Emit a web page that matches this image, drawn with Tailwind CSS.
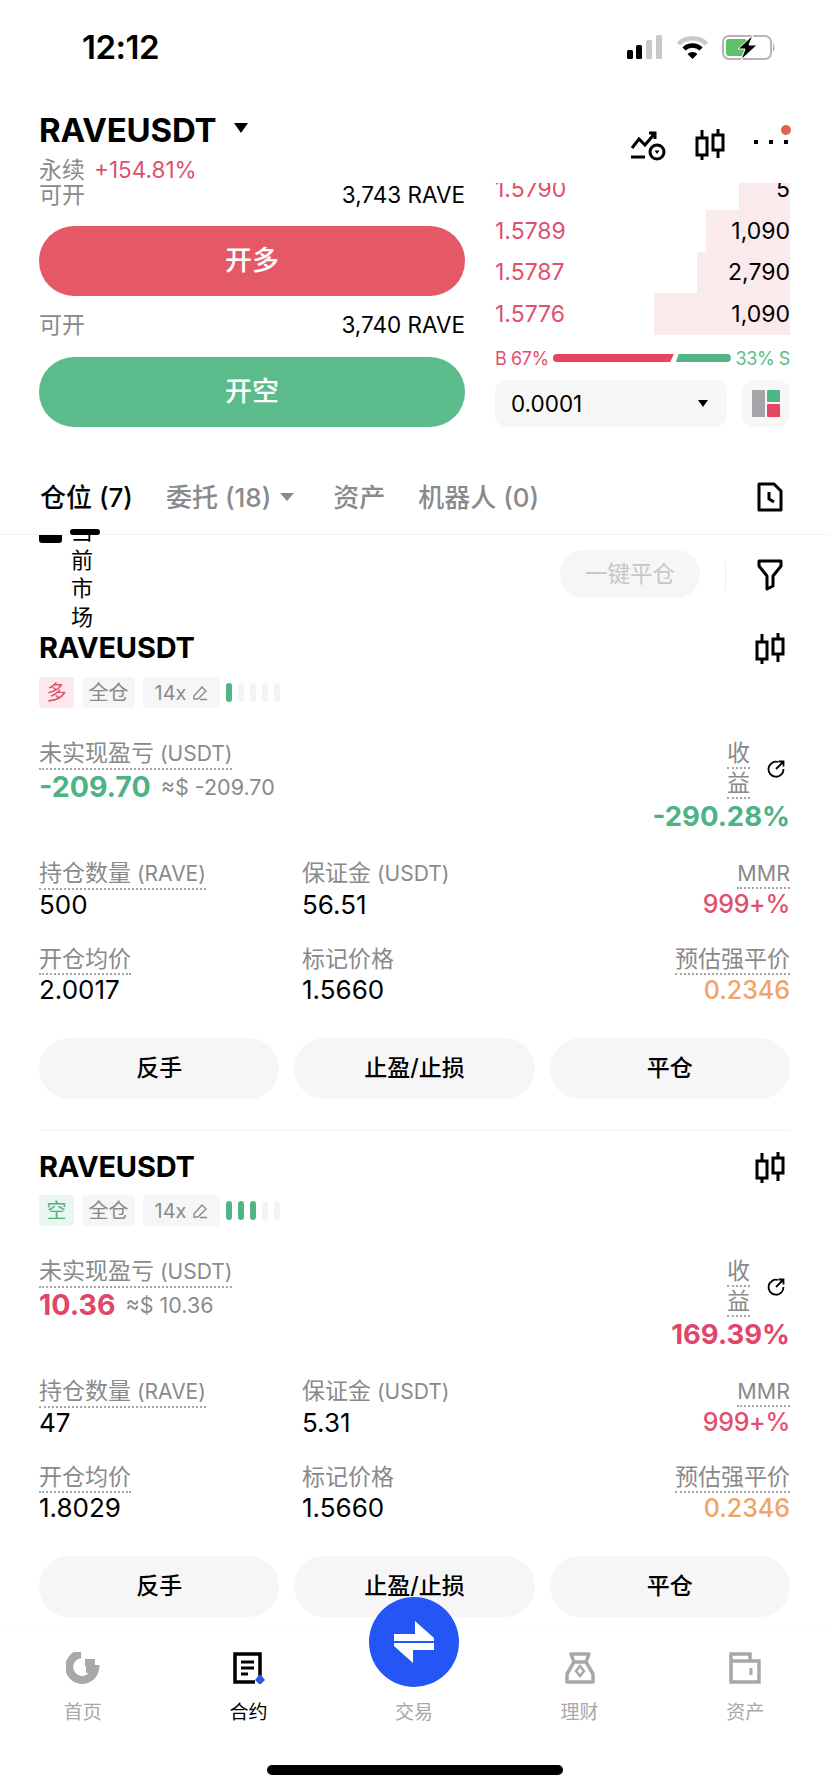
<!DOCTYPE html>
<html lang="zh-CN">
<head>
  <meta charset="UTF-8" />
  <meta name="viewport" content="width=device-width, initial-scale=1.0" />
  <title>RAVEUSDT</title>
  <script src="https://cdn.jsdelivr.net/npm/@tailwindcss/browser@4"></script>
</head>
<body class="bg-white">
  <div class="relative w-[828px] h-[1792px] overflow-hidden flex flex-col bg-white text-black font-['Inter','Noto_Sans_CJK_SC',sans-serif]">

    <!-- Status bar -->
    <div class="h-[96px] shrink-0 flex justify-between pl-[82px] pr-[52px] pt-[27px]">
      <div class="text-[33px] leading-[40px] font-semibold tracking-[-0.5px]">12:12</div>
      <div class="flex items-start pt-[8px]">
        <svg width="35" height="24" viewBox="0 0 35 24">
          <rect x="0" y="15" width="6" height="9" rx="1.5" fill="#000"/>
          <rect x="9" y="10" width="6" height="14" rx="1.5" fill="#000"/>
          <rect x="19" y="5" width="6" height="19" rx="1.5" fill="#c9c9c9"/>
          <rect x="29" y="0" width="6" height="24" rx="1.5" fill="#c9c9c9"/>
        </svg>
        <svg width="33" height="24" viewBox="0 0 32 24" class="ml-[14px]">
          <path d="M2 9 A20 20 0 0 1 30 9" fill="none" stroke="#c9c9c9" stroke-width="4.5"/>
          <path d="M7.5 14 A12 12 0 0 1 24.5 14" fill="none" stroke="#000" stroke-width="4.5"/>
          <path d="M11 19 L16 24 L21 19 A7 7 0 0 0 11 19 Z" fill="#000"/>
        </svg>
        <svg width="54" height="25" viewBox="0 0 54 25" class="ml-[13px]">
          <rect x="1" y="1" width="48" height="23" rx="6" fill="#fff" stroke="#b5b5b5" stroke-width="2"/>
          <rect x="4" y="4" width="21" height="17" rx="3" fill="#5cc169"/>
          <path d="M51 8 C53 9 53 16 51 17 Z" fill="#b5b5b5"/>
          <path d="M31 0 L16 14 L23 14 L19 25 L35 10 L27 10 Z" fill="#000" stroke="#fff" stroke-width="1"/>
        </svg>
      </div>
    </div>

    <!-- Header -->
    <div class="h-[87px] shrink-0 flex justify-between pl-[39px] pr-[38px]">
      <div>
        <div class="flex items-center h-[46px] mt-[11px]">
          <span class="text-[33px] leading-[38px] font-bold tracking-[-0.2px]">RAVEUSDT</span>
          <span class="ml-[18px] mb-[4px] w-0 h-0 border-l-[7px] border-r-[7px] border-t-[10px] border-l-transparent border-r-transparent border-t-black"></span>
        </div>
        <div class="flex items-center h-[26px] mt-[4px]">
          <span class="text-[23px] leading-[26px] text-[#8a8a8a]">永续</span>
          <span class="ml-[9px] text-[22.5px] leading-[26px] text-[#e0506c]">+154.81%</span>
        </div>
      </div>
      <div class="flex items-start mt-[33px]">
        <svg width="36" height="30" viewBox="0 0 36 30" class="mt-[2px]">
          <path d="M2 17 L9 8 L15 14 L25 2 M19 2 H25 V8" fill="none" stroke="#000" stroke-width="3"/>
          <path d="M1 26 H15" stroke="#000" stroke-width="3"/>
          <circle cx="27" cy="21" r="7" fill="#fff" stroke="#000" stroke-width="3"/>
          <path d="M24.5 19.5 H29.5 L27 23 Z" fill="#000"/>
        </svg>
        <svg width="30" height="32" viewBox="0 0 30 32" class="ml-[29px]">
          <path d="M7 1 V31 M23 0 V29" stroke="#000" stroke-width="3"/>
          <rect x="2" y="9" width="10" height="17" fill="#fff" stroke="#000" stroke-width="3"/>
          <rect x="18" y="6" width="10" height="15" fill="#fff" stroke="#000" stroke-width="3"/>
        </svg>
        <div class="relative ml-[29px] w-[36px] h-[32px]">
          <div class="absolute left-0 top-[11px] flex gap-[11px]">
            <span class="w-[4px] h-[4px] bg-black"></span>
            <span class="w-[4px] h-[4px] bg-black"></span>
            <span class="w-[4px] h-[4px] bg-black"></span>
          </div>
          <span class="absolute left-[27px] -top-[4px] w-[10px] h-[10px] rounded-full bg-[#e8604f]"></span>
        </div>
      </div>
    </div>

    <!-- Order panel -->
    <div class="h-[264px] shrink-0 flex pl-[39px] pr-[38px] overflow-hidden">
      <div class="w-[426px]">
        <div class="flex justify-between items-center h-[24px] text-[22.5px]">
          <span class="text-[#8a8a8a] text-[23px]">可开</span>
          <span>3,743 RAVE</span>
        </div>
        <button class="mt-[19px] w-full h-[70px] rounded-full bg-[#e55866] text-white text-[27px] font-medium">开多</button>
        <div class="mt-[17px] flex justify-between items-center h-[24px] text-[22.5px]">
          <span class="text-[#8a8a8a] text-[23px]">可开</span>
          <span>3,740 RAVE</span>
        </div>
        <button class="mt-[20px] w-full h-[70px] rounded-full bg-[#5cbb8a] text-white text-[27px] font-medium">开空</button>
      </div>

      <div class="ml-[30px] w-[295px] text-[23px]">
        <div class="-mt-[15px] h-[42px] flex justify-between items-center relative">
          <span class="absolute right-0 top-[15px] w-[51px] h-[27px] bg-[#fbeaec]"></span>
          <span class="relative text-[#e0506c]">1.5790</span><span class="relative">5</span>
        </div>
        <div class="h-[42px] flex justify-between items-center relative">
          <span class="absolute right-0 top-0 w-[84px] h-full bg-[#fbeaec]"></span>
          <span class="relative text-[#e0506c]">1.5789</span><span class="relative">1,090</span>
        </div>
        <div class="h-[41px] flex justify-between items-center relative">
          <span class="absolute right-0 top-0 w-[93px] h-full bg-[#fbeaec]"></span>
          <span class="relative text-[#e0506c]">1.5787</span><span class="relative">2,790</span>
        </div>
        <div class="h-[42px] flex justify-between items-center relative">
          <span class="absolute right-0 top-0 w-[136px] h-full bg-[#fbeaec]"></span>
          <span class="relative text-[#e0506c]">1.5776</span><span class="relative">1,090</span>
        </div>
        <div class="mt-[12px] h-[22px] flex items-center text-[18px]">
          <span class="text-[#e0506c] tracking-[-0.4px]">B 67%</span>
          <span class="ml-[4px] w-[121px] h-[8px] rounded-l-full bg-[#e5455f] [clip-path:polygon(0_0,100%_0,97%_100%,0_100%)]"></span>
          <span class="ml-[2px] w-[55px] h-[8px] rounded-r-full bg-[#4fb585] [clip-path:polygon(5%_0,100%_0,100%_100%,0_100%)]"></span>
          <span class="ml-auto text-[#5cbb8a] tracking-[-0.4px]">33% S</span>
        </div>
        <div class="mt-[11px] flex justify-between">
          <div class="w-[232px] h-[47px] rounded-[12px] bg-[#f7f7f7] flex items-center justify-between pl-[16px] pr-[19px]">
            <span class="text-[22.5px]">0.0001</span>
            <span class="w-0 h-0 border-l-[5px] border-r-[5px] border-t-[7px] border-l-transparent border-r-transparent border-t-black"></span>
          </div>
          <div class="w-[48px] h-[47px] rounded-[12px] bg-[#f7f7f7] flex items-center justify-center gap-[2px]">
            <span class="w-[13px] h-[27px] bg-[#a3a5a8] rounded-[1px]"></span>
            <div class="flex flex-col gap-[2px]">
              <span class="w-[13px] h-[12px] bg-[#4fb585] rounded-[1px]"></span>
              <span class="w-[13px] h-[13px] bg-[#e5455f] rounded-[1px]"></span>
            </div>
          </div>
        </div>
      </div>
    </div>

    <!-- Tabs -->
    <div class="relative mt-[23px] h-[65px] shrink-0 flex items-center pl-[40px] pr-[45px] pb-[10px] border-b border-[#f3f3f3] text-[26px] text-[#8a8a8a] font-medium">
      <span class="text-black">仓位 (7)</span>
      <span class="ml-[33px]">委托 (18)</span>
      <span class="ml-[9px] w-0 h-0 border-l-[7px] border-r-[7px] border-t-[8px] border-l-transparent border-r-transparent border-t-[#8a8a8a]"></span>
      <span class="ml-[39px]">资产</span>
      <span class="ml-[33px]">机器人 (0)</span>
      <svg width="26" height="30" viewBox="0 0 26 30" class="ml-auto">
        <path d="M2 2 H17 L24 9 V28 H2 Z" fill="none" stroke="#000" stroke-width="3" stroke-linejoin="round"/>
        <path d="M12 10 V17 L17 20" fill="none" stroke="#000" stroke-width="3"/>
      </svg>
      <span class="absolute left-[70px] -bottom-[1px] w-[30px] h-[6px] rounded-full bg-black"></span>
    </div>

    <!-- Positions -->
    <div class="flex-1 min-h-0 overflow-hidden pl-[39px] pr-[38px]">
      <div class="h-[96px] flex items-start overflow-hidden">
        <span class="w-[23px] h-[8px] rounded-b-[3px] bg-black"></span>
        <div class="ml-[8px] w-[24px] -mt-[18px] text-[22px] leading-[28.5px] text-center">当前市场</div>
        <button class="ml-auto mt-[15px] w-[140px] h-[48px] rounded-full bg-[#f6f6f6] text-[22.5px] text-[#c6c6c6]">一键平仓</button>
        <span class="ml-[25px] mt-[27px] w-px h-[28px] bg-[#eeeeee]"></span>
        <svg width="26" height="32" viewBox="0 0 26 32" class="ml-[31px] mr-[7px] mt-[24px]">
          <path d="M2 2 H24 V7 L16 17 V27 L10 30 V17 L2 7 Z" fill="none" stroke="#000" stroke-width="3" stroke-linejoin="round"/>
        </svg>
      </div>

      <!-- Long position -->
      <div class="pb-[31px] border-b border-[#f3f3f3]">
        <div class="flex justify-between items-center h-[34px]">
          <span class="text-[29px] font-bold tracking-[-0.2px]">RAVEUSDT</span>
          <svg width="30" height="32" viewBox="0 0 30 32" class="mr-[5px] mt-[1px]">
            <path d="M7 1 V31 M23 0 V29" stroke="#000" stroke-width="3"/>
            <rect x="2" y="9" width="10" height="17" fill="#fff" stroke="#000" stroke-width="3"/>
            <rect x="18" y="6" width="10" height="15" fill="#fff" stroke="#000" stroke-width="3"/>
          </svg>
        </div>
        <div class="mt-[12px] flex items-center h-[31px] text-[20px]">
          <span class="w-[35px] h-full rounded-[4px] bg-[#fbe9ec] text-[#e0506c] flex items-center justify-center">多</span>
          <span class="ml-[8px] w-[53px] h-full rounded-[4px] bg-[#f6f6f7] text-[#8a8a8a] flex items-center justify-center">全仓</span>
          <span class="ml-[8px] w-[77px] h-full rounded-[4px] bg-[#f6f6f7] text-[#8a8a8a] flex items-center justify-center gap-[6px]">14x
            <svg width="16" height="16" viewBox="0 0 16 16"><path d="M2 11 L10 2 L14 6 L6 14 H2 Z M8 14.5 H15" fill="none" stroke="#8a8a8a" stroke-width="1.4"/></svg>
          </span>
          <div class="ml-[6px] flex gap-[6px]">
            <span class="w-[6px] h-[19px] rounded-full bg-[#4fb585]"></span>
            <span class="w-[6px] h-[19px] rounded-full bg-[#f3f3f3]"></span>
            <span class="w-[6px] h-[19px] rounded-full bg-[#f3f3f3]"></span>
            <span class="w-[6px] h-[19px] rounded-full bg-[#f3f3f3]"></span>
            <span class="w-[6px] h-[19px] rounded-full bg-[#f3f3f3]"></span>
          </div>
        </div>
        <div class="mt-[31px] flex justify-between items-start">
          <div>
            <div class="inline-block text-[21px] leading-[28px] text-[#8a8a8a] border-b-2 border-dotted border-[#a5a5a5]"><span class="text-[23px]">未实现盈亏</span> (USDT)</div>
            <div class="flex items-center h-[34px]">
              <span class="text-[28.5px] font-bold text-[#4db284]">-209.70</span>
              <span class="ml-[10px] text-[21.5px] text-[#8a8a8a]">≈$ -209.70</span>
            </div>
          </div>
          <div class="flex flex-col items-end">
            <div class="flex items-center">
              <div class="w-[23px] text-[23px] leading-[28px] text-[#8a8a8a]">
                <div class="border-b-2 border-dotted border-[#a5a5a5]">收</div>
                <div class="border-b-2 border-dotted border-[#a5a5a5]">益</div>
              </div>
              <svg width="20" height="20" viewBox="0 0 20 20" class="ml-[16px] mr-[4px]">
                <path d="M12 3 A7.5 7.5 0 1 0 17.5 10" fill="none" stroke="#000" stroke-width="1.8"/>
                <path d="M10 10 L17 3 M12.5 2.5 H17.5 V7.5" fill="none" stroke="#000" stroke-width="1.8"/>
              </svg>
            </div>
            <div class="text-[27.5px] leading-[34px] font-bold text-[#4db284]">-290.28%</div>
          </div>
        </div>
        <div class="mt-[26px] grid grid-cols-[263px_1fr_auto] gap-y-[25px]">
          <div>
            <div class="inline-block text-[21px] leading-[28px] text-[#8a8a8a] border-b-2 border-dotted border-[#a5a5a5]"><span class="text-[23px]">持仓数量</span> (RAVE)</div>
            <div class="text-[26px] leading-[30px]">500</div>
          </div>
          <div>
            <div class="text-[21px] leading-[28px] text-[#8a8a8a]"><span class="text-[23px]">保证金</span> (USDT)</div>
            <div class="mt-[2px] text-[26px] leading-[30px]">56.51</div>
          </div>
          <div class="text-right">
            <div class="inline-block text-[21.5px] leading-[28px] text-[#8a8a8a] border-b-2 border-dotted border-[#a5a5a5]">MMR</div>
            <div class="text-[25px] leading-[30px] font-medium tracking-[-0.3px] text-[#e0506c]">999+%</div>
          </div>
          <div>
            <div class="inline-block text-[23px] leading-[28px] text-[#8a8a8a] border-b-2 border-dotted border-[#a5a5a5]">开仓均价</div>
            <div class="text-[26px] leading-[30px]">2.0017</div>
          </div>
          <div>
            <div class="text-[23px] leading-[28px] text-[#8a8a8a]">标记价格</div>
            <div class="mt-[2px] text-[26px] leading-[30px]">1.5660</div>
          </div>
          <div class="text-right">
            <div class="inline-block text-[23px] leading-[28px] text-[#8a8a8a] border-b-2 border-dotted border-[#a5a5a5]">预估强平价</div>
            <div class="text-[25px] leading-[30px] font-medium text-[#f0a467]">0.2346</div>
          </div>
        </div>
        <div class="mt-[33px] grid grid-cols-3 gap-[15px]">
          <button class="h-[61px] rounded-full bg-[#f6f6f6] text-[23px] font-medium">反手</button>
          <button class="h-[61px] rounded-full bg-[#f6f6f6] text-[23px] font-medium">止盈/止损</button>
          <button class="h-[61px] rounded-full bg-[#f6f6f6] text-[23px] font-medium">平仓</button>
        </div>
      </div>

      <!-- Short position -->
      <div class="mt-[19px]">
        <div class="flex justify-between items-center h-[34px]">
          <span class="text-[29px] font-bold tracking-[-0.2px]">RAVEUSDT</span>
          <svg width="30" height="32" viewBox="0 0 30 32" class="mr-[5px] mt-[1px]">
            <path d="M7 1 V31 M23 0 V29" stroke="#000" stroke-width="3"/>
            <rect x="2" y="9" width="10" height="17" fill="#fff" stroke="#000" stroke-width="3"/>
            <rect x="18" y="6" width="10" height="15" fill="#fff" stroke="#000" stroke-width="3"/>
          </svg>
        </div>
        <div class="mt-[11px] flex items-center h-[31px] text-[20px]">
          <span class="w-[35px] h-full rounded-[4px] bg-[#e9f7f0] text-[#4db284] flex items-center justify-center">空</span>
          <span class="ml-[8px] w-[53px] h-full rounded-[4px] bg-[#f6f6f7] text-[#8a8a8a] flex items-center justify-center">全仓</span>
          <span class="ml-[8px] w-[77px] h-full rounded-[4px] bg-[#f6f6f7] text-[#8a8a8a] flex items-center justify-center gap-[6px]">14x
            <svg width="16" height="16" viewBox="0 0 16 16"><path d="M2 11 L10 2 L14 6 L6 14 H2 Z M8 14.5 H15" fill="none" stroke="#8a8a8a" stroke-width="1.4"/></svg>
          </span>
          <div class="ml-[6px] flex gap-[6px]">
            <span class="w-[6px] h-[19px] rounded-full bg-[#4fb585]"></span>
            <span class="w-[6px] h-[19px] rounded-full bg-[#4fb585]"></span>
            <span class="w-[6px] h-[19px] rounded-full bg-[#4fb585]"></span>
            <span class="w-[6px] h-[19px] rounded-full bg-[#f3f3f3]"></span>
            <span class="w-[6px] h-[19px] rounded-full bg-[#f3f3f3]"></span>
          </div>
        </div>
        <div class="mt-[31px] flex justify-between items-start">
          <div>
            <div class="inline-block text-[21px] leading-[28px] text-[#8a8a8a] border-b-2 border-dotted border-[#a5a5a5]"><span class="text-[23px]">未实现盈亏</span> (USDT)</div>
            <div class="flex items-center h-[34px]">
              <span class="text-[28.5px] font-bold text-[#e0456a]">10.36</span>
              <span class="ml-[10px] text-[21.5px] text-[#8a8a8a]">≈$ 10.36</span>
            </div>
          </div>
          <div class="flex flex-col items-end">
            <div class="flex items-center">
              <div class="w-[23px] text-[23px] leading-[28px] text-[#8a8a8a]">
                <div class="border-b-2 border-dotted border-[#a5a5a5]">收</div>
                <div class="border-b-2 border-dotted border-[#a5a5a5]">益</div>
              </div>
              <svg width="20" height="20" viewBox="0 0 20 20" class="ml-[16px] mr-[4px]">
                <path d="M12 3 A7.5 7.5 0 1 0 17.5 10" fill="none" stroke="#000" stroke-width="1.8"/>
                <path d="M10 10 L17 3 M12.5 2.5 H17.5 V7.5" fill="none" stroke="#000" stroke-width="1.8"/>
              </svg>
            </div>
            <div class="text-[27.5px] leading-[34px] font-bold text-[#e0456a]">169.39%</div>
          </div>
        </div>
        <div class="mt-[26px] grid grid-cols-[263px_1fr_auto] gap-y-[25px]">
          <div>
            <div class="inline-block text-[21px] leading-[28px] text-[#8a8a8a] border-b-2 border-dotted border-[#a5a5a5]"><span class="text-[23px]">持仓数量</span> (RAVE)</div>
            <div class="text-[26px] leading-[30px]">47</div>
          </div>
          <div>
            <div class="text-[21px] leading-[28px] text-[#8a8a8a]"><span class="text-[23px]">保证金</span> (USDT)</div>
            <div class="mt-[2px] text-[26px] leading-[30px]">5.31</div>
          </div>
          <div class="text-right">
            <div class="inline-block text-[21.5px] leading-[28px] text-[#8a8a8a] border-b-2 border-dotted border-[#a5a5a5]">MMR</div>
            <div class="text-[25px] leading-[30px] font-medium tracking-[-0.3px] text-[#e0506c]">999+%</div>
          </div>
          <div>
            <div class="inline-block text-[23px] leading-[28px] text-[#8a8a8a] border-b-2 border-dotted border-[#a5a5a5]">开仓均价</div>
            <div class="text-[26px] leading-[30px]">1.8029</div>
          </div>
          <div>
            <div class="text-[23px] leading-[28px] text-[#8a8a8a]">标记价格</div>
            <div class="mt-[2px] text-[26px] leading-[30px]">1.5660</div>
          </div>
          <div class="text-right">
            <div class="inline-block text-[23px] leading-[28px] text-[#8a8a8a] border-b-2 border-dotted border-[#a5a5a5]">预估强平价</div>
            <div class="text-[25px] leading-[30px] font-medium text-[#f0a467]">0.2346</div>
          </div>
        </div>
        <div class="mt-[33px] grid grid-cols-3 gap-[15px]">
          <button class="h-[61px] rounded-full bg-[#f6f6f6] text-[23px] font-medium">反手</button>
          <button class="h-[61px] rounded-full bg-[#f6f6f6] text-[23px] font-medium">止盈/止损</button>
          <button class="h-[61px] rounded-full bg-[#f6f6f6] text-[23px] font-medium">平仓</button>
        </div>
      </div>
    </div>

    <!-- Bottom nav -->
    <div class="relative h-[167px] shrink-0 bg-white border-t border-[#fafafa]">
      <div class="grid grid-cols-5 pt-[26px] text-[19px] text-[#a8a8a8]">
        <div class="flex flex-col items-center">
          <svg width="34" height="32" viewBox="0 0 34 32">
            <path d="M15 2 A13 13 0 1 0 29 17 H20" fill="none" stroke="#a8a8a8" stroke-width="8"/>
            <rect x="19" y="7" width="10" height="7" fill="#a8a8a8"/>
          </svg>
          <span class="mt-[15px]">首页</span>
        </div>
        <div class="flex flex-col items-center text-black">
          <svg width="34" height="32" viewBox="0 0 34 32">
            <path d="M29 24 V2 H4 V30 H24" fill="none" stroke="#000" stroke-width="3.5"/>
            <path d="M10 10 H23 M10 16 H23 M10 22 H17" stroke="#000" stroke-width="3"/>
            <path d="M29 22 L34 28 L29 33 L24 28 Z" fill="#2b59e0"/>
          </svg>
          <span class="mt-[15px]">合约</span>
        </div>
        <div class="flex flex-col items-center">
          <div class="h-[32px]"></div>
          <span class="mt-[15px]">交易</span>
        </div>
        <div class="flex flex-col items-center">
          <svg width="32" height="32" viewBox="0 0 32 32">
            <path d="M7 2 H25 L22 10 L29 22 V30 H3 V22 L10 10 Z M10 10 H22" fill="none" stroke="#a8a8a8" stroke-width="3.5" stroke-linejoin="round"/>
            <path d="M16 14 L20 19 L16 24 L12 19 Z" fill="none" stroke="#a8a8a8" stroke-width="2.5"/>
          </svg>
          <span class="mt-[15px]">理财</span>
        </div>
        <div class="flex flex-col items-center">
          <svg width="32" height="32" viewBox="0 0 32 32">
            <path d="M2 2 H21 V9 H30 V30 H2 Z M2 9 H21" fill="none" stroke="#a8a8a8" stroke-width="3.5"/>
            <path d="M22 16 V23" stroke="#a8a8a8" stroke-width="3"/>
          </svg>
          <span class="mt-[15px]">资产</span>
        </div>
      </div>
      <div class="absolute left-[369px] -top-[29px] w-[90px] h-[90px] rounded-full bg-[#2456f5] flex items-center justify-center">
        <svg width="42" height="44" viewBox="0 0 42 44">
          <path d="M22 1 L41 18 V21 H1 V14 H22 Z" fill="#fff"/>
          <path d="M20 43 L1 26 V23 H41 V30 H20 Z" fill="#fff"/>
        </svg>
      </div>
      <div class="absolute left-[267px] bottom-[17px] w-[296px] h-[10px] rounded-full bg-black"></div>
    </div>
  </div>
</body>
</html>
